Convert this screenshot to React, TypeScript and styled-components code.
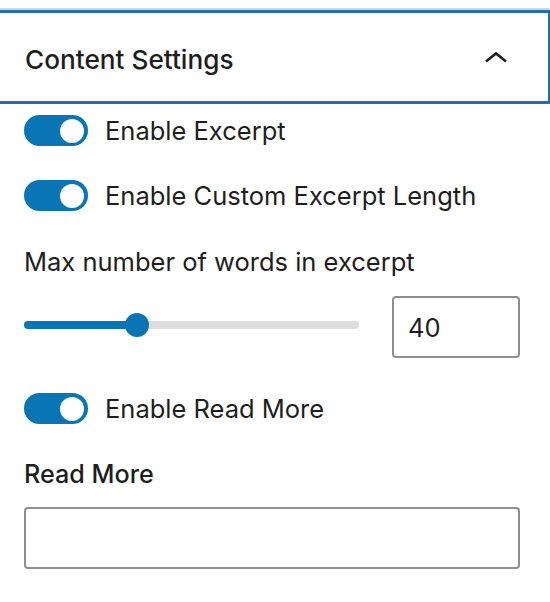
import React from "react";
import styled, { createGlobalStyle } from "styled-components";

const Global = createGlobalStyle`
  html, body { margin: 0; padding: 0; background: #fff; }
  body { font-family: Inter, "Noto Sans", "Liberation Sans", sans-serif; color: #1e1e1e; }
  * { box-sizing: border-box; }
`;

const Page = styled.div`
  width: 550px;
  height: 602px;
  padding-top: 8px;
  overflow: hidden;
`;

const TopRule = styled.div`
  height: 2px;
  background: #c6d8ec;
`;

const Header = styled.div`
  height: 94px;
  border-top: 3px solid #2171a8;
  border-bottom: 3px solid #2171a8;
  border-right: 2px solid #2171a8;
  display: flex;
  align-items: center;
  justify-content: space-between;
  padding: 4px 40px 0 25px;
`;

const Title = styled.h2`
  margin: 0;
  font-size: 26.2px;
  font-weight: 500;
  letter-spacing: 0;
`;

const Chevron = styled.svg`
  margin-top: -4px;
`;

const Body = styled.div`
  display: flex;
  flex-direction: column;
  padding: 0 30px 0 24px;
`;

const ToggleRow = styled.label<{ $top: number }>`
  display: flex;
  align-items: center;
  gap: 17px;
  margin-top: ${(p) => p.$top}px;
  height: 31px;
  font-size: 25.5px;
`;

const Track = styled.span<{ $on: boolean }>`
  width: 64px;
  height: 31px;
  border-radius: 16px;
  background: ${(p) => (p.$on ? "#0a75b5" : "#fff")};
  display: flex;
  align-items: center;
  justify-content: ${(p) => (p.$on ? "flex-end" : "flex-start")};
  padding: 0 4px;
  flex-shrink: 0;
`;

const Knob = styled.span`
  width: 24px;
  height: 24px;
  border-radius: 50%;
  background: #fff;
`;

const FieldLabel = styled.div<{ $top: number; $weight?: number }>`
  margin-top: ${(p) => p.$top}px;
  font-size: ${(p) => (p.$weight === 500 ? 25.2 : 25.5)}px;
  line-height: 32px;
  font-weight: ${(p) => p.$weight ?? 400};
`;

const RangeRow = styled.div`
  display: flex;
  align-items: center;
  gap: 33px;
  margin-top: 18px;
  height: 62px;
`;

const RangeTrack = styled.div`
  position: relative;
  width: 335px;
  height: 8px;
  border-radius: 4px;
  background: #dddddd;
  margin-top: -4px;
`;

const RangeFill = styled.div`
  position: absolute;
  left: 0;
  top: 0;
  height: 8px;
  border-radius: 4px;
  background: #0a75b5;
`;

const RangeThumb = styled.div`
  position: absolute;
  top: 50%;
  width: 24px;
  height: 24px;
  margin: -12px 0 0 -12px;
  border-radius: 50%;
  background: #0a75b5;
`;

const NumberBox = styled.div`
  width: 128px;
  height: 62px;
  border: 2px solid #8f8f8f;
  border-radius: 4px;
  display: flex;
  align-items: center;
  padding-left: 14px;
  font-size: 25.5px;
`;

const TextBox = styled.div`
  margin-top: 17px;
  width: 496px;
  height: 62px;
  border: 2px solid #8f8f8f;
  border-radius: 4px;
`;

function Toggle({ label, on, top }: { label: string; on: boolean; top: number }) {
  return (
    <ToggleRow $top={top}>
      <Track $on={on}>
        <Knob />
      </Track>
      <span>{label}</span>
    </ToggleRow>
  );
}

export default function App() {
  const min = 0;
  const max = 119;
  const value = 40;
  const pct = ((value - min) / (max - min)) * 100;
  return (
    <>
      <Global />
      <Page>
        <TopRule />
        <Header>
          <Title>Content Settings</Title>
          <Chevron width="24" height="14" viewBox="0 0 24 14" fill="none">
            <path d="M2 11.5 L12 3.5 L22 11.5" stroke="#1e1e1e" strokeWidth="2.6" />
          </Chevron>
        </Header>
        <Body>
          <Toggle label="Enable Excerpt" on top={11} />
          <Toggle label="Enable Custom Excerpt Length" on top={34} />
          <FieldLabel $top={35}>Max number of words in excerpt</FieldLabel>
          <RangeRow>
            <RangeTrack>
              <RangeFill style={{ width: `${pct}%` }} />
              <RangeThumb style={{ left: `${pct}%` }} />
            </RangeTrack>
            <NumberBox>40</NumberBox>
          </RangeRow>
          <Toggle label="Enable Read More" on top={35} />
          <FieldLabel $top={34} $weight={500}>Read More</FieldLabel>
          <TextBox />
        </Body>
      </Page>
    </>
  );
}
